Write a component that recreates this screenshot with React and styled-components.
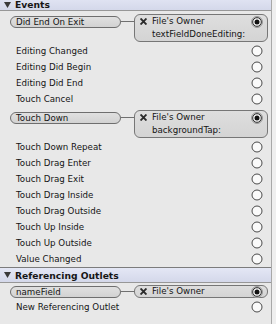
import React from "react";
import styled, { createGlobalStyle } from "styled-components";

const GlobalStyle = createGlobalStyle`
  html, body { margin: 0; padding: 0; }
  body {
    background: #e8e8e8;
    font-family: "DejaVu Sans", "Lucida Grande", sans-serif;
    color: #141414;
  }
`;

const Panel = styled.div`
  display: flex;
  width: 276px;
  height: 324px;
  overflow: hidden;
  background: #e8e8e8;
`;

const Content = styled.div`
  width: 271px;
  display: flex;
  flex-direction: column;
`;

const Edge = styled.div`
  flex: 1;
  border-left: 1px solid #a8a8a8;
  background: #efefef;
`;

const SectionHeader = styled.div`
  height: 16px;
  box-sizing: border-box;
  margin-top: ${(p) => p.$offset || 0}px;
  padding: ${(p) => p.$nudge || 0}px 0 0 4px;
  border-top: 1px solid #7c7c7c;
  border-bottom: 1px solid #979797;
  background: linear-gradient(#e4e7f5, #d4d8ea);
  display: flex;
  align-items: center;
  gap: 4px;
  font-size: 9.2px;
  font-weight: bold;
  color: #161616;
`;

const Row = styled.div`
  height: 16px;
  display: flex;
  align-items: center;
  padding: 0 8px 0 16px;
  font-size: 8.7px;
`;

const Label = styled.span`
  flex: 1;
  white-space: nowrap;
`;

const ConnectedRow = styled.div`
  height: ${(p) => (p.$lines === 2 ? 32 : 16)}px;
  box-sizing: border-box;
  display: flex;
  align-items: flex-start;
  padding: ${(p) => (p.$lines === 2 ? 3 : 2)}px 3px 0 10px;
  font-size: 8.7px;
`;

const Pill = styled.div`
  width: 111px;
  height: 12px;
  flex: none;
  box-sizing: border-box;
  margin-top: ${(p) => (p.$lines === 2 ? 1.5 : 0.5)}px;
  padding-left: 5px;
  border: 1px solid #6e6e6e;
  border-radius: 6px;
  background: linear-gradient(#e0e0e0, #d2d2d2);
  line-height: 10px;
  white-space: nowrap;
`;

const Connector = styled.div`
  width: 13px;
  height: 1px;
  flex: none;
  margin-top: ${(p) => (p.$lines === 2 ? 7 : 6)}px;
  background: #707070;
`;

const Box = styled.div`
  flex: 1;
  display: grid;
  grid-template-columns: 17px 1fr 12px;
  align-items: start;
  padding-right: 4px;
  border: 1px solid #767676;
  border-radius: 6px;
  background: linear-gradient(#dedede, #d4d4d4);
  --lh: ${(p) => (p.$single ? 11 : 13)}px;
  line-height: var(--lh);
`;

const Mark = styled.div`
  height: var(--lh);
  display: flex;
  align-items: center;
  padding-left: 5px;
`;

const Lines = styled.div`
  display: flex;
  flex-direction: column;
  white-space: nowrap;
`;

const SocketCell = styled.div`
  height: var(--lh);
  display: flex;
  align-items: center;
`;

const Tri = () => (
  <svg width="7" height="6" viewBox="0 0 7 6">
    <polygon points="0,0 7,0 3.5,6" fill="#3a3a3a" />
  </svg>
);

const XMark = () => (
  <svg width="7" height="7" viewBox="0 0 7 7">
    <path d="M1.2 1.2 L5.8 5.8 M5.8 1.2 L1.2 5.8" stroke="#2b2b2b" strokeWidth="1.9" strokeLinecap="square" />
  </svg>
);

const Socket = ({ filled }) =>
  filled ? (
    <svg width="12" height="12" viewBox="0 0 12 12">
      <circle cx="6" cy="6" r="5.5" fill="#c4c4c4" stroke="#9a9a9a" strokeWidth="1" />
      <circle cx="6" cy="6" r="4.3" fill="#fdfdfd" stroke="#2a2a2a" strokeWidth="1" />
      <circle cx="6" cy="6" r="2.5" fill="#111" />
    </svg>
  ) : (
    <svg width="12" height="12" viewBox="0 0 12 12">
      <circle cx="6" cy="6" r="5" fill="#fafafa" stroke="#4a4a4a" strokeWidth="1" />
    </svg>
  );

const events = [
  { name: "Did End On Exit", target: ["File's Owner", "textFieldDoneEditing:"] },
  { name: "Editing Changed" },
  { name: "Editing Did Begin" },
  { name: "Editing Did End" },
  { name: "Touch Cancel" },
  { name: "Touch Down", target: ["File's Owner", "backgroundTap:"] },
  { name: "Touch Down Repeat" },
  { name: "Touch Drag Enter" },
  { name: "Touch Drag Exit" },
  { name: "Touch Drag Inside" },
  { name: "Touch Drag Outside" },
  { name: "Touch Up Inside" },
  { name: "Touch Up Outside" },
  { name: "Value Changed" },
];

const outlets = [
  { name: "nameField", target: ["File's Owner"] },
  { name: "New Referencing Outlet" },
];

const Item = ({ name, target }) => {
  if (!target) {
    return (
      <Row>
        <Label>{name}</Label>
        <Socket />
      </Row>
    );
  }
  const n = target.length;
  return (
    <ConnectedRow $lines={n}>
      <Pill $lines={n}>{name}</Pill>
      <Connector $lines={n} />
      <Box $single={n === 1}>
        <Mark>
          <XMark />
        </Mark>
        <Lines>
          {target.map((t) => (
            <span key={t}>{t}</span>
          ))}
        </Lines>
        <SocketCell>
          <Socket filled />
        </SocketCell>
      </Box>
    </ConnectedRow>
  );
};

export default function App() {
  return (
    <>
      <GlobalStyle />
      <Panel>
        <Content>
          <SectionHeader $offset={-5} $nudge={3}>
            <Tri />
            <span>Events</span>
          </SectionHeader>
          {events.map((e) => (
            <Item key={e.name} {...e} />
          ))}
          <SectionHeader>
            <Tri />
            <span>Referencing Outlets</span>
          </SectionHeader>
          {outlets.map((e) => (
            <Item key={e.name} {...e} />
          ))}
        </Content>
        <Edge />
      </Panel>
    </>
  );
}
